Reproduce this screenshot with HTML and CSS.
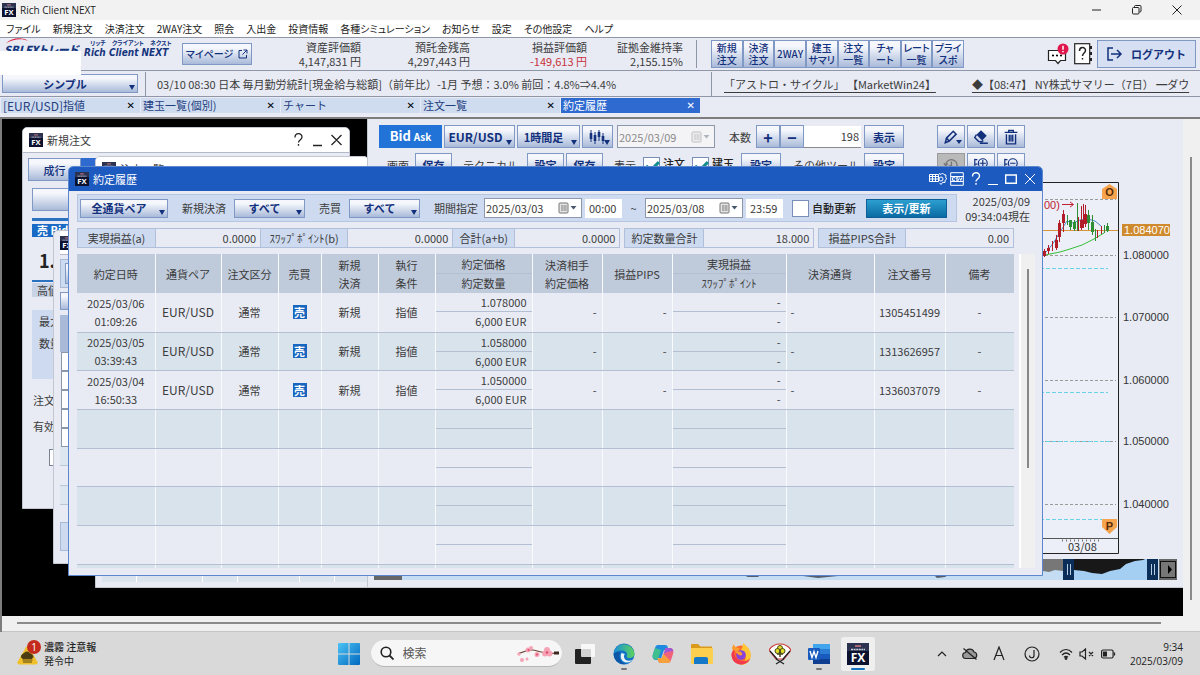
FILE: index.html
```html
<!DOCTYPE html>
<html lang="ja">
<head>
<meta charset="utf-8">
<title>Rich Client NEXT</title>
<link rel="stylesheet" href="styles.css">
</head>
<body>
<svg class="defs" aria-hidden="true">
  <symbol id="fx" viewBox="0 0 22 22">
    <rect width="22" height="22" fill="#0b1230"/>
    <rect width="22" height="8" fill="#2c3350"/>
    <path d="M4 6.500h14" stroke="#c9cdd9" stroke-width="1.400" stroke-dasharray="2 .6"/>
    <path d="M8 3h6" stroke="#e0808a" stroke-width="1.400"/>
    <text x="11" y="18.500" text-anchor="middle" font-family="Open Sans" font-weight="700" font-size="12" fill="#fff">FX</text>
  </symbol>
  <symbol id="cal" viewBox="0 0 20 12">
    <rect x="1" y="1" width="9" height="10" rx="1" fill="#e4e4e4" stroke="#777"/>
    <path d="M3 4h6M3 6h6M3 8h6M4 3v6M7 3v6" stroke="#888" stroke-width=".7"/>
    <path d="M12.500 4h6l-3 3.500z" fill="#46586e"/>
  </symbol>
</svg>

<header class="titlebar">
  <svg class="ico14"><use href="#fx"/></svg>
  <span class="app-name">Rich Client NEXT</span>
  <div class="win-ctl">
    <svg viewBox="0 0 10 10"><path d="M0 5h9"/></svg>
    <svg viewBox="0 0 10 10"><rect x=".5" y="2.500" width="6.500" height="6.500" rx="1"/><path d="M2.500 2V1.500a1 1 0 0 1 1-1H8a1 1 0 0 1 1 1V6a1 1 0 0 1-1 1h-.5"/></svg>
    <svg viewBox="0 0 10 10"><path d="M.5.5l9 9M9.500.5l-9 9"/></svg>
  </div>
</header>

<nav class="menubar">
  <span>ファイル</span><span>新規注文</span><span>決済注文</span><span>2WAY注文</span><span>照会</span><span>入出金</span><span>投資情報</span><span>各種シミュレーション</span><span>お知らせ</span><span>設定</span><span>その他設定</span><span>ヘルプ</span>
</nav>

<section class="account">
  <div class="brand">
    <svg class="swoosh" viewBox="0 0 76 16"><path d="M2 5C8-1 20-1 24 3c-6-3-14-2-22 2z" fill="#d9233f"/></svg>
    <span class="brand-sbi">SBI FXトレード</span>
  </div>
  <div class="product"><small>リッチ　クライアント　ネクスト</small><b>Rich Client NEXT</b></div>
  <button class="btn mypage">マイページ <svg viewBox="0 0 10 10"><path d="M4 1.500H1v7.500h7.500V6M5.500 1H9v3.500M9 1L4.500 5.500"/></svg></button>
  <dl class="figures">
    <div><dt>資産評価額</dt><dd>4,147,831 円</dd></div>
    <div><dt>預託金残高</dt><dd>4,297,443 円</dd></div>
    <div><dt>損益評価額</dt><dd class="neg">-149,613 円</dd></div>
    <div><dt>証拠金維持率</dt><dd>2,155.15%</dd></div>
  </dl>
  <div class="quick">
    <button>新規<br>注文</button><button>決済<br>注文</button><button>2WAY</button><button>建玉<br>サマリ</button><button>注文<br>一覧</button><button>チャ<br>ート</button><button>レート<br>一覧</button><button>プライ<br>スポ</button>
  </div>
  <div class="right-tools">
    <svg class="chat" viewBox="0 0 22 22"><path d="M1.500 7.500h17v10h-5L11 20.500 8.500 17.500h-7z" fill="#fff" stroke="#222" stroke-width="1.200"/><circle cx="6" cy="12.500" r="1.100"/><circle cx="10" cy="12.500" r="1.100"/><circle cx="14" cy="12.500" r="1.100"/><circle cx="16" cy="6" r="5.500" fill="#e0174c"/><path d="M16 2.800v4M16 8v1.300" stroke="#fff" stroke-width="1.500"/></svg>
    <svg class="help" viewBox="0 0 18 22"><rect x=".7" y=".7" width="15" height="20" fill="#fff" stroke="#222" stroke-width="1.200"/><path d="M17 3v3M17 9v3M17 15v3" stroke="#222" stroke-width="2"/><path d="M5.500 8c0-4.500 6-4.500 6-.5 0 2.500-3 2.500-3 5.500M8.500 15v1.600" fill="none" stroke="#222" stroke-width="1.500"/></svg>
    <button class="btn logout"><svg viewBox="0 0 16 14"><path d="M6 1H1v12h5M4 7h10M10 3l4 4-4 4"/></svg>ログアウト</button>
  </div>
  <div class="mask"></div>
</section>

<section class="info">
  <span class="combo layout"><select aria-label="レイアウト"><option>シンプル</option></select></span>
  <p class="econ">03/10 08:30 日本 毎月勤労統計[現金給与総額]（前年比）-1月 予想：3.0% 前回：4.8%⇒4.4%</p>
  <p class="news"><a href="#">「アストロ・サイクル」 【MarketWin24】</a><a href="#">◆【08:47】 NY株式サマリー（7日） ━ダウ</a></p>
</section>

<nav class="tabs">
  <div class="tab"><span class="lat">[EUR/USD]</span>指値<button aria-label="閉じる">✕</button></div>
  <div class="tab">建玉一覧(個別)<button aria-label="閉じる">✕</button></div>
  <div class="tab">チャート<button aria-label="閉じる">✕</button></div>
  <div class="tab">注文一覧<button aria-label="閉じる">✕</button></div>
  <div class="tab active">約定履歴<button aria-label="閉じる">✕</button></div>
</nav>

<main class="workspace">
 <div class="desk-row">
  <div class="desktop">

   <section class="win w-order">
    <header class="win-title"><svg class="ico14"><use href="#fx"/></svg>新規注文
     <svg class="ctl" viewBox="0 0 56 14"><path d="M2 4.500c0-5 7-5 7-.5 0 3-3.500 3-3.500 5.500M5.500 11v1.800M20 12.500h9M38.500 2l10 10M48.500 2l-10 10" fill="none" stroke="#222" stroke-width="1.300"/></svg>
    </header>
    <div class="order-tabs"><button class="btn">成行</button><i></i></div>
    <button class="btn order-wide" aria-label="注文"></button>
    <div class="bid">売 Bid</div>
    <div class="bid-price">1.08</div>
    <div class="hi">高値</div>
    <div class="lot"><span>最大</span><span>数量</span></div>
    <div class="order-label">注文</div>
    <div class="order-label">有効</div>
    <input type="checkbox" class="order-check" aria-label="確認">
   </section>

   <section class="win w-list">
    <header class="win-title"><svg class="ico14"><use href="#fx"/></svg>注文一覧</header>
    <div class="list-foot"><i></i><i></i><i></i><i></i><i></i><i></i></div>
   </section>

   <section class="win w-chart">
    <div class="ch-bar">
     <button class="bidask">Bid <small>Ask</small></button>
     <span class="combo pair"><select aria-label="通貨ペア"><option>EUR/USD</option></select></span>
     <span class="combo foot"><select aria-label="足種"><option>1時間足</option></select></span>
     <span class="combo kind"><button class="btn" aria-label="チャート種類"><svg viewBox="0 0 16 14"><path d="M2 0v12M6 2v12M10 0v11M14 3v11" stroke="#12307c"/><path d="M2 3v6M6 5v6M10 2v5M14 6v5" stroke="#12307c" stroke-width="2.600"/></svg></button></span>
     <span class="date off"><input value="2025/03/09" aria-label="日付"><svg><use href="#cal"/></svg></span>
     <label class="count" for="cnt">本数</label>
     <button class="btn step">+</button><button class="btn step">−</button>
     <input id="cnt" class="cnt" value="198">
     <button class="btn show">表示</button>
     <span class="draw">
      <button class="btn caret" aria-label="描画"><svg viewBox="0 0 14 14"><path d="M3 8l6-6 2.500 2.500-6 6L2 12zM3 8l2.500 2.500" fill="none" stroke="#12307c" stroke-width="1.300"/></svg></button>
      <button class="btn" aria-label="消去"><svg viewBox="0 0 14 14"><path d="M7 1l5 5-4 4-5-5z" fill="#12307c"/><path d="M3 5L1.500 7.500 5 11h3l1-1M6 12.500h7" fill="none" stroke="#12307c" stroke-width="1.200"/></svg></button>
      <button class="btn" aria-label="削除"><svg viewBox="0 0 14 14"><path d="M1.500 3h11M5 3V1.300h4V3M3 4.500V13h8V4.500M5.500 5v6M7 5v6M8.500 5v6" fill="none" stroke="#12307c" stroke-width="1.200"/></svg></button>
     </span>
    </div>
    <div class="ch-bar second">
     <span class="t1">画面</span><button class="btn sm">保存</button>
     <span class="t2">テクニカル</span><button class="btn sm">設定</button><button class="btn sm">保存</button>
     <span class="t3">表示</span><label><input type="checkbox" checked>注文</label><label><input type="checkbox" checked>建玉</label><button class="btn set">設定</button>
     <span class="t4">その他ツール</span><button class="btn set">設定</button>
     <span class="draw">
      <button class="btn grey" aria-label="履歴"><svg viewBox="0 0 18 18"><path d="M3 9a6.500 6.500 0 1 1 1 4M1 7l2 2.500L5.500 7.500M9.500 5v5h-3" fill="none" stroke="#777" stroke-width="1.500"/></svg></button>
      <button class="btn" aria-label="拡大"><svg viewBox="0 0 18 18"><path d="M2 2v12M2 3h3M2 8h3M11 3.500v7M7.500 7h7" fill="none" stroke="#12307c" stroke-width="1.300"/><circle cx="11" cy="7" r="5" fill="none" stroke="#12307c" stroke-width="1.300"/></svg></button>
      <button class="btn" aria-label="縮小"><svg viewBox="0 0 18 18"><path d="M2 2v12M2 3h3M2 8h3M8 7h6" fill="none" stroke="#12307c" stroke-width="1.300"/><circle cx="11" cy="7" r="5" fill="none" stroke="#12307c" stroke-width="1.300"/></svg></button>
     </span>
    </div>
    <div class="plot">
     <svg viewBox="0 0 138 372" width="138" height="372">
      <path d="M0 .5H78.500V371.500H0" fill="#eceff7" stroke="#222"/>
      <path d="M0 17.500H76M0 73.500H76M0 135.500H76M0 198.500H76M0 259.500H76M0 322.500H76" stroke="#9a9a9a" stroke-dasharray="3 2"/>
      <path d="M0 86.500H68M0 210.500H68M0 259.500H70M0 337.500H62" stroke="#67d3e6" stroke-dasharray="4 2"/>
      <path d="M0 48.500H78" stroke="#d9953c"/>
      <path d="M0 76L8 68 14 60 20 50 27 39 33 41 40 38 48 37 55 39 61 44" fill="none" stroke="#4a8bd0"/>
      <path d="M0 74L10 72 20 70 30 67 42 63 54 57 64 51" fill="none" stroke="#35c035"/>
      <path d="M4.500 67v8M8.500 63v9M12.500 59v10M16.500 53v15M19.500 38v22M23.500 28v22M38.500 35v14M41.500 24v24M43.500 22v24M45.500 23v22M57.500 48v8M61.500 44v8" stroke="#b01d28"/>
      <path d="M4.500 69v5M8.500 66v3M16.500 58v8M19.500 41v14M23.500 32v9M41.500 38v8M45.500 32v10" stroke="#b01d28" stroke-width="3"/>
      <path d="M27.500 33v10M30.500 38v10M34.500 38v11M37.500 21v28M48.500 28v20M52.500 33v20M55.500 47v12M64.500 43v8M67.500 41v9" stroke="#2f8f36"/>
      <path d="M30.500 38v7M34.500 40v7M48.500 33v8M52.500 40v10M67.500 44v5" stroke="#2f8f36" stroke-width="3"/>
      <text x="4" y="27" class="red">00)</text>
      <path d="M22 22.500h11M30 20l3.500 2.500L30 25" fill="none" stroke="#c02030"/>
      <path d="M69.500 2L77 7v10H62V7z" fill="#f6a44d"/><text x="69.500" y="14" text-anchor="middle" class="mk">O</text>
      <path d="M62 337h15v8l-7.500 7-7.500-7z" fill="#f6a44d"/><text x="69.500" y="348" text-anchor="middle" class="mk">P</text>
      <path d="M0 356.500H78" stroke="#555"/><path d="M22 358.500H62" stroke="#777" stroke-width="2" stroke-dasharray="1 3"/>
      <text x="28" y="369" class="day">03/08</text>
      <rect x="82" y="42" width="48" height="12" fill="#cf8a2e"/><text x="84" y="52" class="now">1.084070</text>
      <text x="83" y="77">1.080000</text><text x="83" y="139">1.070000</text><text x="83" y="202">1.060000</text><text x="83" y="263">1.050000</text><text x="83" y="326">1.040000</text>
     </svg>
    </div>
    <div class="navi">
     <span class="navi-l"></span>
     <span class="navi-mid"></span>
     <svg viewBox="0 0 434 21" width="434" height="21"><rect width="434" height="21" fill="#c4ddf3"/><path d="M0 16h10l2 1h4l-1 1H5zM35 15h70l-10 2-20 2-15-2zM190 15h17l-5 3-8 1z" fill="#555d6b"/><path d="M300 0h20v12l-8-1-6 2-6-1z" fill="#777"/><rect x="330" width="74" height="21" fill="#a4cef2"/><path d="M331 0h71l-2 1-8 1-9 3-6 5-10 2-8 3-10-1-8-2-10-1z" fill="#181818"/><path d="M320 0h11v21h-11zM404 0h11v21h-11z" fill="#0a2e57"/><path d="M324.500 5v11M327.500 5v11M408.500 5v11M411.500 5v11" stroke="#b8cde2"/><rect x="416" width="18" height="21" fill="#666"/><rect x="417.500" y="2.500" width="15" height="16" fill="#777" stroke="#111"/><path d="M425 6l4 4.500-4 4.500z" fill="#000"/></svg>
    </div>
   </section>

   <section class="win w-pos">
    <header class="win-title"><svg class="ico14"><use href="#fx"/></svg></header>
    <div class="pos-filter"><button class="btn" aria-label="通貨ペア"></button></div>
    <button class="btn pos-btn" aria-label="決済"></button>
    <div class="pos-head"></div>
    <div class="pos-box"></div><div class="pos-box"></div><div class="pos-box"></div><div class="pos-box"></div><div class="pos-box"></div>
    <div class="pos-rows"></div>
    <div class="pos-sum"></div>
   </section>

   <section class="win w-main">
    <header class="win-title">
     <svg class="ico14"><use href="#fx"/></svg>約定履歴
     <span class="main-ctl">
      <svg width="18" height="14" viewBox="0 0 18 14"><path d="M.5 2.500h9v7h-9zM.5 4.500h9M.5 7h9M3.500 2.500v7M6.500 2.500v7"/><path d="M10 1.500l2 1 1.500-1.500 1.500 1.700 2 .3-.3 2.200 1 1.800-1.500 1.200-.2 2.300-2.300-.2L12 12.500l-1.500-1.700"/><circle cx="12" cy="7" r="2"/></svg>
      <svg width="14" height="14" viewBox="0 0 14 14"><path d="M.7.7h12.600v12.600H.7zM.7 4.500h12.600M.7 9.500h12.600"/><path d="M5 5.700H2.500v2.600H5M8.500 5.700H6.200V7h2.300v1.300H6.200M9.500 5.500l1.200 3 1.200-3"/></svg>
      <svg width="10" height="14" viewBox="0 0 10 14"><path d="M1.500 4.500c0-5 7-5 7-.5 0 3-3.500 3-3.500 5.500M5 11v1.800" stroke-width="1.400"/></svg>
      <svg width="10" height="14" viewBox="0 0 10 14"><path d="M0 12.500h10"/></svg>
      <svg width="12" height="14" viewBox="0 0 12 14"><path d="M.7 3h10.600v8.300H.7z" stroke-width="1.400"/></svg>
      <svg width="12" height="14" viewBox="0 0 12 14"><path d="M1 2l10 10M11 2L1 12"/></svg>
     </span>
    </header>
    <div class="main-body">
     <div class="filter-row">
      <form class="filter">
       <span class="combo f-pair"><select aria-label="通貨ペア"><option>全通貨ペア</option></select></span>
       <label for="s1">新規決済</label><span class="combo f-all"><select id="s1"><option>すべて</option></select></span>
       <label for="s2">売買</label><span class="combo f-all"><select id="s2"><option>すべて</option></select></span>
       <label for="d1">期間指定</label>
       <span class="date"><input id="d1" value="2025/03/03"><svg><use href="#cal"/></svg></span>
       <input class="time" value="00:00" aria-label="開始時刻"><span class="tilde">~</span>
       <span class="date"><input value="2025/03/08" aria-label="終了日"><svg><use href="#cal"/></svg></span>
       <input class="time" value="23:59" aria-label="終了時刻">
       <label class="auto"><input type="checkbox">自動更新</label>
       <button type="button" class="refresh">表示/更新</button>
      </form>
      <div class="asof">2025/03/09<br>09:34:04現在</div>
     </div>
     <div class="summary">
      <dl class="g1"><dt>実現損益(a)</dt><dd>0.0000</dd><dt>ｽﾜｯﾌﾟﾎﾟｲﾝﾄ(b)</dt><dd>0.0000</dd><dt>合計(a+b)</dt><dd>0.0000</dd></dl>
      <dl class="g2"><dt>約定数量合計</dt><dd>18.000</dd></dl>
      <dl class="g3"><dt>損益PIPS合計</dt><dd>0.00</dd></dl>
     </div>
     <div class="grid-wrap">
      <div class="grid-clip">
      <table class="grid">
       <colgroup><col style="width:78px"><col style="width:66px"><col style="width:57px"><col style="width:43px"><col style="width:57px"><col style="width:57px"><col style="width:97px"><col style="width:70px"><col style="width:70px"><col style="width:114px"><col style="width:88px"><col style="width:71px"><col style="width:69px"></colgroup>
       <thead><tr><th>約定日時</th><th>通貨ペア</th><th>注文区分</th><th>売買</th><th>新規<br>決済</th><th>執行<br>条件</th><th class="two"><div>約定価格</div><div>約定数量</div></th><th>決済相手<br>約定価格</th><th>損益PIPS</th><th class="two"><div>実現損益</div><div>ｽﾜｯﾌﾟﾎﾟｲﾝﾄ</div></th><th>決済通貨</th><th>注文番号</th><th>備考</th></tr></thead>
       <tbody>
        <tr><td>2025/03/06<br>01:09:26</td><td class="lat">EUR/USD</td><td>通常</td><td><b class="sell">売</b></td><td>新規</td><td>指値</td><td class="two"><div>1.078000</div><div>6,000 EUR</div></td><td class="r">-</td><td class="r">-</td><td class="two"><div>-</div><div>-</div></td><td class="l">-</td><td>1305451499</td><td>-</td></tr>
        <tr><td>2025/03/05<br>03:39:43</td><td class="lat">EUR/USD</td><td>通常</td><td><b class="sell">売</b></td><td>新規</td><td>指値</td><td class="two"><div>1.058000</div><div>6,000 EUR</div></td><td class="r">-</td><td class="r">-</td><td class="two"><div>-</div><div>-</div></td><td class="l">-</td><td>1313626957</td><td>-</td></tr>
        <tr><td>2025/03/04<br>16:50:33</td><td class="lat">EUR/USD</td><td>通常</td><td><b class="sell">売</b></td><td>新規</td><td>指値</td><td class="two"><div>1.050000</div><div>6,000 EUR</div></td><td class="r">-</td><td class="r">-</td><td class="two"><div>-</div><div>-</div></td><td class="l">-</td><td>1336037079</td><td>-</td></tr>
        <tr><td></td><td></td><td></td><td></td><td></td><td></td><td class="two"><div></div><div></div></td><td></td><td></td><td class="two"><div></div><div></div></td><td></td><td></td><td></td></tr>
        <tr><td></td><td></td><td></td><td></td><td></td><td></td><td class="two"><div></div><div></div></td><td></td><td></td><td class="two"><div></div><div></div></td><td></td><td></td><td></td></tr>
        <tr><td></td><td></td><td></td><td></td><td></td><td></td><td class="two"><div></div><div></div></td><td></td><td></td><td class="two"><div></div><div></div></td><td></td><td></td><td></td></tr>
        <tr><td></td><td></td><td></td><td></td><td></td><td></td><td class="two"><div></div><div></div></td><td></td><td></td><td class="two"><div></div><div></div></td><td></td><td></td><td></td></tr>
        <tr><td></td><td></td><td></td><td></td><td></td><td></td><td></td><td></td><td></td><td></td><td></td><td></td><td></td></tr>
       </tbody>
      </table>
      </div>
      <div class="grid-scroll"><i></i></div>
     </div>
    </div>
   </section>
  </div>
  <div class="vscroll"><i></i></div>
 </div>
 <div class="hscroll"><i></i></div>
</main>

<footer class="taskbar">
 <div class="weather">
  <svg width="24" height="26" viewBox="0 0 24 26"><path d="M11 6L20.500 22a2 2 0 0 1-1.500 2.500H2A2 2 0 0 1 .5 22L9 7z" fill="#efc02a"/><path d="M5.500 18.500a2.500 2.500 0 0 1 1-4.500 4 4 0 0 1 7 0 2.500 2.500 0 0 1 1.500 4.500zM5.500 20h10M6 22h9" fill="#4a3b12" stroke="#4a3b12" stroke-width=".9"/><circle cx="17" cy="7" r="7" fill="#c42b1c"/><text x="17" y="10.500" text-anchor="middle" font-size="10" fill="#fff" font-family="Open Sans">1</text></svg>
  <p><b>濃霧 注意報</b><br>発令中</p>
 </div>
 <div class="apps">
  <svg width="22" height="22" viewBox="0 0 22 22"><defs><linearGradient id="wn" x2="1" y2="1"><stop stop-color="#4cc4f5"/><stop offset="1" stop-color="#0067bf"/></linearGradient></defs><path d="M0 1a1 1 0 0 1 1-1h9.500v10.500H0zM11.500 0H21a1 1 0 0 1 1 1v9.500H11.500zM0 11.500h10.500V22H1a1 1 0 0 1-1-1zM11.500 11.500H22V21a1 1 0 0 1-1 1h-9.500z" fill="url(#wn)"/></svg>
  <label class="search">
   <svg width="14" height="14" viewBox="0 0 14 14"><circle cx="6" cy="6" r="4.800" fill="none" stroke="#222" stroke-width="1.600"/><path d="M9.500 9.500l4 4" stroke="#222" stroke-width="1.800"/></svg>
   <input placeholder="検索" aria-label="検索">
   <svg width="44" height="22" viewBox="0 0 44 22"><path d="M3 11c5 0 7-4 14-3s12 5 25 3" fill="none" stroke="#6b4636" stroke-width="1.200"/><path d="M38 11h5" stroke="#3b2620" stroke-width="3"/><g fill="#f5a3b5"><circle cx="12" cy="8" r="2.500"/><circle cx="15" cy="6" r="2"/><circle cx="21" cy="12.500" r="2.500"/><circle cx="31" cy="8" r="3"/><circle cx="29" cy="11.500" r="3"/><circle cx="33.500" cy="11.500" r="3"/><circle cx="3" cy="12" r="1.700"/><circle cx="6" cy="18" r="2"/><circle cx="11" cy="17" r="1.500"/></g><g fill="#d94f72"><circle cx="31" cy="10.500" r="1.300"/><circle cx="21" cy="12.500" r="1"/><circle cx="12.500" cy="8" r="1"/></g></svg>
  </label>
  <span class="app"><svg width="22" height="22" viewBox="0 0 22 22"><rect x="1" y="6" width="16" height="15" rx="1" fill="#222"/><rect x="7" y="1" width="14" height="13" rx="1" fill="#fff" opacity=".8"/></svg></span>
  <span class="app run"><svg width="22" height="22" viewBox="0 0 22 22"><defs><linearGradient id="eg" x2="1"><stop stop-color="#1b8fd8"/><stop offset="1" stop-color="#5bd35c"/></linearGradient></defs><circle cx="11" cy="11" r="10.500" fill="#1273c5"/><path d="M.6 10A10.500 10.500 0 0 1 21.400 10.500c0 4-3.400 5-6.400 4.500-2-.5-1-1.500-1-3.500C14 8 10 7 7 7.500 3.500 8 1.500 9.500.6 10z" fill="url(#eg)"/><path d="M8.500 10c-2 4 0 9 4.500 9.500 3 .3 5-1 6.500-2.500-5 2-8 0-8.500-3-.2-1.500.5-2.500.8-3z" fill="#e8f2f6"/><path d="M7.500 9.500C5 13 7 20 13 21 7 22 1 18 .6 11c2-2.500 5-2.500 6.900-1.500z" fill="#0d56a6"/></svg></span>
  <span class="app"><svg width="22" height="22" viewBox="0 0 22 22"><path d="M6 2h7c2 0 2.500 1 3 3l.7 2H12L8.500 17H4c-3 0-4-3-3-6l2-6c.5-2 1.500-3 3-3z" fill="#1e8be0"/><path d="M1 11l2-6 6 2-3 9.500H4c-3 0-4-2.500-3-5.500z" fill="#3fbf8f"/><path d="M16 20H9c-2 0-2.500-1-3-3l-.5-2H10L13.500 5H18c3 0 4 3 3 6l-2 6c-.5 2-1.500 3-3 3z" fill="#f2617a"/><path d="M6 17l-.5-2H10l1.500-4 7 7c-.7 1.300-1.500 2-2.500 2H9c-2 0-2.500-1-3-3z" fill="#f6a13c"/><path d="M13.500 5H18c2 0 3 1.500 3.300 3L15 9l-3 2z" fill="#a158d8"/></svg></span>
  <span class="app"><svg width="22" height="22" viewBox="0 0 22 22"><path d="M0 2a1 1 0 0 1 1-1h6l2.500 2.500H21V8H0z" fill="#d99a1c"/><rect y="5" width="22" height="16" rx="1" fill="#fcd04e"/><path d="M3 21v-5a2 2 0 0 1 2-2h10a2 2 0 0 1 2 2v5z" fill="#1678c8"/></svg></span>
  <span class="app"><svg width="22" height="22" viewBox="0 0 22 22"><circle cx="11" cy="12" r="9.500" fill="#ff6a2c"/><path d="M13 0c5 4 9 8 7.500 15-1 4-5 7-9.500 7 8-6 5-12-1-14 2-2 3-5 3-8z" fill="#ffc533"/><path d="M2 6c0-2 1-4 2-5 0 3 3 4 6 4l-3 5z" fill="#ff9a2e"/><circle cx="11" cy="12" r="4.800" fill="#8a42d8"/><path d="M6 9c3-2 7 0 6 3-2 1-4 0-6-3z" fill="#ff9a2e"/><path d="M1.500 11c0 7 5 10.500 9.500 10.500s8-2.500 9-6c-3 3-9 4-13 0C4 13 4 9 5 7 3 8 1.500 9 1.500 11z" fill="#f0394f"/></svg></span>
  <span class="app"><svg width="22" height="22" viewBox="0 0 22 22"><path d="M0 7C5-1 17-1 22 7l-7 9H7z" fill="#fff" stroke="#c33" stroke-width="1.200"/><path d="M1 8l7 8M21 8l-7 8M7 16l8 5M15 16l-8 5" stroke="#222" stroke-width="1.200"/><circle cx="11" cy="5" r="2.500" fill="#e4dc2a" stroke="#474b16"/><circle cx="8.500" cy="8" r="2.500" fill="#e4dc2a" stroke="#474b16"/><circle cx="13.500" cy="8" r="2.500" fill="#e4dc2a" stroke="#474b16"/><path d="M11 7v7M8 11h6" stroke="#474b16" stroke-width="1.500"/></svg></span>
  <span class="app run"><svg width="22" height="22" viewBox="0 0 22 22"><rect x="5" y="1" width="17" height="20" rx="1" fill="#2b7cd3"/><rect x="5" y="1" width="17" height="5" fill="#41a5ee"/><rect x="5" y="11" width="17" height="5" fill="#185abd"/><rect x="5" y="16" width="17" height="5" fill="#103f91"/><rect y="5" width="12" height="12" rx="1" fill="#185abd"/><path d="M2 8l2 6.500L6 8.500l2 6L10 8" fill="none" stroke="#fff" stroke-width="1.400"/></svg></span>
  <span class="app on"><svg width="22" height="22"><use href="#fx"/></svg></span>
 </div>
 <div class="tray">
  <svg width="10" height="6" viewBox="0 0 10 6"><path d="M1 5l4-4 4 4"/></svg>
  <svg class="m1" width="16" height="14" viewBox="0 0 16 14"><path d="M4 11.500a3 3 0 0 1-.5-6 4.500 4.500 0 0 1 8.500-.5 3.300 3.300 0 0 1 0 6.500zM1.500 1.500l13 11" fill="#999"/></svg>
  <svg class="m2" width="12" height="15" viewBox="0 0 12 15"><path d="M1 14L6 1l5 13M3 9.500h6"/></svg>
  <svg class="m3" width="16" height="16" viewBox="0 0 16 16"><circle cx="8" cy="8" r="7"/><path d="M10 4v5.500c0 3-4.500 3-4.500 0"/></svg>
  <svg class="m3" width="14" height="12" viewBox="0 0 14 12"><path d="M1 4.500c3.500-4 8.500-4 12 0M3 7c2.500-2.500 5.500-2.500 8 0M5 9.200c1.300-1.200 2.700-1.200 4 0"/><circle cx="7" cy="10.500" r=".8" fill="#222"/></svg>
  <svg class="m4" width="15" height="12" viewBox="0 0 15 12"><path d="M1 4v4h2l3.500 3V1L3 4zM10 4l4 4M14 4l-4 4"/></svg>
  <svg class="m5" width="15" height="10" viewBox="0 0 15 10"><rect x=".6" y="1" width="11.500" height="8" rx="1.500"/><rect x="2" y="2.500" width="4" height="5" fill="#222" stroke="none"/><path d="M13.500 3.500v3"/></svg>
  <p>9:34<br>2025/03/09</p>
 </div>
</footer>
</body>
</html>
```
FILE: styles.css
```css
* { box-sizing: border-box; }
body {
  margin: 0;
  min-height: 100vh;
  display: flex;
  flex-direction: column;
  overflow: hidden;
  background: #e8ebf4;
  color: #3c3c3c;
  font-family: "Noto Sans CJK JP", "Noto Sans", sans-serif;
  font-size: 11px;
  line-height: 16px;
  white-space: nowrap;
}
p, dl, dd { margin: 0; }
button, input, select { font: inherit; color: inherit; margin: 0; }
button { cursor: pointer; white-space: nowrap; }
.defs { position: absolute; width: 0; height: 0; }
.ico14 { width: 14px; height: 14px; flex: none; }
.lat { font-size: 12px; }

.btn {
  display: inline-flex;
  align-items: center;
  justify-content: center;
  padding: 0;
  border: 1px solid #7f98c4;
  background: linear-gradient(#f5f7fc 20%, #a9bad9);
  color: #12307c;
  font-weight: 700;
}
.combo { position: relative; display: inline-flex; flex: none; }
.combo::after {
  content: "";
  position: absolute;
  right: 3px;
  bottom: 3px;
  border: 3px solid transparent;
  border-top: 5px solid #12307c;
  border-bottom: 0;
  pointer-events: none;
}
.combo select {
  appearance: none;
  width: 100%;
  padding: 0 10px 0 0;
  border: 1px solid #7f98c4;
  border-radius: 0;
  background: linear-gradient(#f5f7fc 20%, #a9bad9);
  color: #12307c;
  font-weight: 700;
  text-align: center;
  text-align-last: center;
}

/* application chrome */
.titlebar {
  flex: none;
  height: 20px;
  display: flex;
  align-items: center;
  gap: 4px;
  padding: 0 18px 0 2px;
  background: #f2f2f2;
  color: #1c1c1c;
  font-family: "Open Sans", sans-serif;
}
.app-name { font-size: 10px; }
.win-ctl { margin-left: auto; display: flex; gap: 30px; }
.win-ctl svg { width: 10px; height: 10px; fill: none; stroke: #222; }
.menubar {
  flex: none;
  height: 18px;
  display: flex;
  gap: 12px;
  padding: 1px 6px;
  background: #fff;
  color: #222;
  font-size: 10px;
  font-feature-settings: "palt";
  border-bottom: 1px solid #8f96a8;
}
.account {
  position: relative;
  flex: none;
  height: 33px;
  display: flex;
  align-items: center;
  padding-right: 4px;
  border-bottom: 1px solid #8f96a8;
}
.brand { width: 81px; flex: none; align-self: flex-start; display: flex; flex-direction: column; padding-left: 4px; }
.swoosh { width: 76px; height: 16px; margin-bottom: -13px; }
.brand-sbi { color: #14377f; font-weight: 800; font-size: 11px; font-style: italic; font-feature-settings: "palt"; }
.product { width: 101px; flex: none; align-self: flex-start; padding: 1px 0 0 3px; color: #16367e; }
.product small { display: block; margin-left: 6px; font-size: 6px; line-height: 8px; font-weight: 700; font-feature-settings: "palt"; }
.product b { display: block; font: italic 700 10px/12px "DejaVu Sans Condensed", sans-serif; }
.mypage { width: 70px; height: 22px; gap: 5px; flex: none; font-size: 10px; font-weight: 500; font-feature-settings: "palt"; }
.mypage svg { width: 10px; height: 10px; fill: none; stroke: #12307c; }
.figures { display: flex; flex: 1; justify-content: flex-end; line-height: 14px; text-align: right; padding-right: 12px; border-right: 1px solid #8f96a8; }
.figures > div:nth-child(2) { width: 109px; }
.figures > div:nth-child(3) { width: 117px; }
.figures > div:nth-child(4) { width: 97px; padding-right: 1px; }
.neg { color: #c8323c; }
.quick { display: flex; flex: none; margin-left: 14px; width: 253px; }
.quick button {
  flex: 1;
  height: 28px;
  padding: 0;
  border: 1px solid #7f98c4;
  background: linear-gradient(#f5f7fc 20%, #a9bad9);
  color: #12307c;
  font-size: 10px;
  font-weight: 500;
  line-height: 12px;
  font-feature-settings: "palt";
}
.right-tools { display: flex; align-items: center; margin-left: 83px; flex: none; }
.chat { width: 22px; height: 22px; }
.help { width: 18px; height: 22px; margin-left: 5px; }
.logout { width: 99px; height: 28px; margin-left: 5px; gap: 8px; background: #d7e0f2; }
.logout svg { width: 16px; height: 14px; fill: none; stroke: #12307c; stroke-width: 1.5; }
.mask { position: absolute; z-index: 2; left: 0; top: 13px; width: 81px; height: 24px; background: #fff; }
.info {
  flex: none;
  height: 26px;
  display: flex;
  align-items: center;
  padding: 0 4px 0 2px;
  border-bottom: 1px solid #8f96a8;
  overflow: hidden;
}
.layout { width: 136px; margin-right: 7px; }
.layout select { height: 19px; }
.econ { flex: 1; padding-left: 11px; border-left: 1px solid #8f96a8; line-height: 24px; }
.news { display: flex; gap: 36px; width: 485px; padding-left: 12px; border-left: 1px solid #8f96a8; line-height: 24px; overflow: hidden; }
.news a { color: inherit; text-underline-offset: 3px; }
.tabs { flex: none; height: 20px; display: flex; gap: 1px; padding: 1px 0 0 1px; }
.tab { display: flex; width: 139px; height: 15px; padding: 0 5px 0 2px; background: #cfdcf0; color: #24407f; line-height: 15px; }
.tab button { margin-left: auto; padding: 0; border: 0; background: none; color: #000; font: 700 10px/15px "DejaVu Sans", sans-serif; }
.tab.active { background: #2f6ad0; color: #fff; }
.tab.active button { color: #fff; }

/* desktop */
.workspace { flex: 1; display: flex; flex-direction: column; border: 2px solid #7d7d7d; border-width: 2px 0 0 2px; background: #f0f0f0; }
.desk-row { flex: 1; display: flex; }
.desktop { position: relative; flex: 1; background: #000; overflow: hidden; }
.vscroll { width: 17px; padding: 38px 0 16px 7px; display: flex; }
.vscroll i { width: 2px; background: #8a8a8a; }
.hscroll { height: 16px; padding: 6px 39px 0 15px; border-bottom: 1px solid #c4c4c4; }
.hscroll i { display: block; height: 2px; background: #8a8a8a; }
.win { position: absolute; display: flex; flex-direction: column; background: #e8ebf4; border: 1px solid #c2c7d2; border-radius: 5px 5px 0 0; overflow: hidden; }
.win-title { flex: none; display: flex; align-items: center; gap: 4px; height: 24px; padding: 0 6px; background: #fff; }
.ctl { width: 56px; height: 14px; margin-left: auto; }

.w-order { left: 20px; top: 8px; width: 328px; height: 382px; align-items: flex-start; }
.w-order .win-title { width: 100%; height: 25px; padding-right: 0; border-bottom: 1px solid #b4bac8; }
.order-tabs { display: flex; margin: 5px 0 0 5px; }
.order-tabs .btn { width: 53px; height: 23px; font-weight: 500; }
.order-tabs i { width: 60px; height: 23px; background: #2f6ad0; }
.order-wide { width: 130px; height: 23px; margin: 7px 0 7px 9px; }
.bid { width: 130px; margin-left: 9px; padding: 2px 5px 0; border-top: 3px solid #2a72bf; color: #fff; font-weight: 700; line-height: 14px; background: linear-gradient(#e8ebf4 3px, #1a69c4 3px); }
.bid-price { width: 130px; height: 45px; margin-left: 9px; padding: 13px 0 0 7px; font-size: 18px; line-height: 20px; font-weight: 700; color: #222; border-bottom: 2px solid #2a72bf; }
.hi { width: 130px; height: 14px; margin: 1px 0 13px 9px; padding-left: 5px; line-height: 14px; background: #c9d3e6; }
.lot { display: flex; flex-direction: column; gap: 6px; width: 130px; height: 69px; margin: 0 0 13px 9px; padding: 3px 7px; background: #cddaf0; }
.order-label { margin-left: 10px; height: 26px; }
.order-check { appearance: none; width: 16px; height: 17px; margin: 5px 0 0 26px; border: 1px solid #7a8396; background: #fff; }

.w-list { left: 93px; top: 37px; width: 274px; height: 432px; justify-content: space-between; }
.list-foot { height: 18px; margin: 0 0 5px 6px; display: flex; gap: 1px; background: #fff; }
.list-foot i { flex: 1 0 34px; background: #dbe4ee; }
.list-foot i:nth-child(2) { flex-basis: 65px; }
.list-foot i:nth-child(4) { flex-basis: 61px; }

.w-chart { left: 365px; top: 0; right: 0; height: 469px; border-width: 0 0 1px 1px; border-radius: 0; padding: 6px 5px 0 11px; }
.ch-bar { display: flex; align-items: center; height: 23px; }
.ch-bar.second { margin: 5px 0 6px; }
.ch-bar > * { flex: none; }
.ch-bar .btn, .ch-bar select { height: 23px; }
.bidask { width: 63px; height: 23px; margin-right: 2px; padding: 0; border: 0; background: #2273d8; color: #fff; font-weight: 700; font-size: 13px; }
.bidask small { font-size: 10px; }
.pair { width: 71px; margin-right: 2px; }
.pair select { padding-right: 8px; font-size: 12px; }
.foot { width: 63px; margin-right: 2px; }
.kind { width: 31px; margin-right: 4px; }
.kind .btn { width: 100%; padding-right: 2px; }
.kind svg { width: 16px; height: 14px; }
.date { display: inline-flex; align-items: center; width: 98px; height: 20px; border: 1px solid #8d97ab; background: #fff; }
.date input { flex: 1; width: 60px; padding: 0 0 0 1px; border: 0; background: none; }
.date svg { width: 20px; height: 12px; margin-right: 3px; flex: none; }
.date.off { height: 23px; color: #8a8a8a; background: #f4f4f6; margin-right: 14px; }
.date.off svg { opacity: .4; }
.count { margin-right: 5px; }
.step { width: 24px; font-size: 16px; }
.cnt { width: 57px; height: 22px; border: 0; border-bottom: 1px solid #8a8a8a; background: #fff; text-align: right; padding: 0 2px 0 0; }
.show { width: 40px; margin-left: 3px; }
.draw { display: flex; gap: 2px; margin-left: 33px; }
.draw .btn { position: relative; width: 28px; }
.draw svg { width: 16px; height: 16px; }
.draw .grey { background: #b9b9b9; border-color: #9a9a9a; }
.caret::after { content: ""; position: absolute; right: 2px; bottom: 3px; border: 3px solid transparent; border-top: 4px solid #12307c; border-bottom: 0; }
.sm { width: 37px; }
.sm + .sm { margin-left: 2px; }
.set { width: 40px; }
.t1 { margin: 0 6px 0 8px; }
.t2 { margin: 0 9px 0 11px; }
.t3 { margin: 0 7px 0 11px; }
.t4 { margin: 0 5px 0 12px; }
.ch-bar label input { appearance: none; width: 17px; height: 17px; margin-right: 3px; border: 1px solid #7a8fb8; background: #fff; vertical-align: middle; }
.ch-bar label input::before { content: ""; display: block; width: 10px; height: 5px; margin: 3px 0 0 2px; border: solid #128d8d; border-width: 0 0 3px 3px; rotate: -45deg; }
.second label { margin-right: 7px; font-weight: 500; color: #222; }
.plot { display: flex; justify-content: flex-end; margin-right: -5px; }
.plot svg { flex: none; }
.plot text { font: 11px "Liberation Sans", sans-serif; fill: #333; }
.plot .red { fill: #c02030; }
.plot .mk { font-weight: 700; fill: #5a2c08; }
.plot .now { fill: #fff; }
.plot .day { font-family: "Noto Sans CJK JP", sans-serif; }
.plot svg { margin-right: 5px; }
.navi { display: flex; height: 21px; margin: 5px 1px 0 0; }
.navi-l { width: 28px; margin-left: -5px; background: #666; }
.navi-mid { flex: 1; background: #c4ddf3; }

.w-pos { left: 51px; top: 111px; width: 900px; height: 334px; align-items: flex-start; padding-left: 6px; }
.w-pos .win-title { width: 100%; border-bottom: 1px solid #b4bac8; padding-left: 0; }
.pos-filter { width: 200px; height: 29px; margin: 4px 0; padding: 3px 4px; border: 1px solid #a9b9d8; background: #cddaf0; }
.pos-filter .btn { width: 60px; height: 21px; }
.pos-btn { width: 60px; height: 18px; margin-bottom: 5px; }
.pos-head { width: 200px; height: 37px; background: #a9b9d8; }
.pos-box { width: 60px; height: 19px; margin-left: 1px; border: 1px solid #8d97ab; border-right: 0; background: #fff; }
.pos-rows { width: 200px; height: 72px; background: repeating-linear-gradient(#dbe6ef 0 18px, #b8c6d6 18px 19px, #e8ebf4 19px 38px, #b8c6d6 38px 39px); }
.pos-sum { width: 200px; height: 29px; margin-top: 3px; border: 1px solid #a9b9d8; background: #cddaf0; }

/* execution history */
.w-main { left: 66px; top: 47px; right: 140px; height: 410px; border-color: #5c86cf; }
.w-main .win-title { background: #1d5abf; color: #fff; }
.main-ctl { display: flex; align-items: center; gap: 7px; margin-left: auto; }
.main-ctl svg { fill: none; stroke: #fff; }
.main-ctl svg:first-child { margin-right: -4px; }
.main-body { flex: 1; min-height: 0; display: flex; flex-direction: column; padding: 3px 6px 7px 8px; }
.filter-row { display: flex; height: 28px; }
.filter { flex: 1; display: flex; align-items: center; padding: 0 9px 0 2px; border: 1px solid #b5c5e2; background: #cddaef; }
.filter > * { flex: none; }
.filter select { height: 19px; }
.f-pair { width: 88px; margin-right: 14px; }
.f-all { width: 71px; margin: 0 14px 0 8px; }
.filter .date { margin: 0 3px 0 0; }
.filter label[for="d1"] { margin-right: 6px; }
.time { width: 37px; height: 19px; padding: 0 0 0 4px; border: 0; background: #fff; }
.tilde { width: 23px; text-align: center; }
.auto { margin: 0 auto 0 9px; display: flex; align-items: center; gap: 3px; font-weight: 500; color: #222; }
.auto input { appearance: none; width: 17px; height: 17px; border: 1px solid #7a8fb8; background: #fff; }
.refresh { width: 81px; height: 19px; padding: 0; border: 1px solid #0f5f96; background: linear-gradient(#2c9fd0, #0a6ba4); color: #fff; font-weight: 700; line-height: 16px; }
.asof { width: 79px; padding-right: 6px; text-align: right; line-height: 15px; }
.summary { display: flex; gap: 4px; margin: 6px 22px 6px 0; }
.summary dl { display: flex; height: 20px; border: 1px solid #b0bfda; line-height: 18px; }
.summary dt { background: #cddaef; text-align: center; border-right: 1px solid #b0bfda; }
.summary dd { flex: 1; padding-right: 4px; text-align: right; }
.summary dd + dt { border-left: 1px solid #b0bfda; }
.g1 { flex: 545; }
.g1 dt:nth-of-type(1) { width: 78px; }
.g1 dt:nth-of-type(2) { width: 88px; }
.g1 dt:nth-of-type(3) { width: 63px; }
.g2 { flex: 189; }
.g2 dt { width: 79px; }
.g3 { flex: 195; }
.g3 dt { width: 87px; }
.grid-wrap { flex: 1; min-height: 0; display: flex; }
.grid-clip { flex: 1; overflow: hidden; }
.grid { width: 100%; table-layout: fixed; border-collapse: collapse; text-align: center; line-height: 18px; }
.grid th, .grid td { height: 39px; padding: 0; font-weight: 400; border-right: 1px solid #f8fafd; }
.grid th { background: #bfcadb; }
.grid td { border-bottom: 1px solid #b3c0d4; }
.grid tbody tr:nth-child(even) { background: #d9e3ec; }
.grid td.r { text-align: right; padding-right: 5px; }
.grid td.l { text-align: left; padding-left: 4px; }
.two div { height: 19px; line-height: 18px; }
.two div:first-child { border-bottom: 1px solid #b3c0d4; }
td.two div { padding-right: 5px; text-align: right; }
.grid tbody tr:nth-child(3n+2) td { height: 38px; }
.grid tbody tr:nth-child(3n+2) .two div:last-child { height: 18px; }
.sell { display: inline-block; width: 14px; height: 14px; line-height: 14px; background: #1766c0; color: #fff; font-weight: 700; }
.grid-scroll { width: 17px; padding: 15px 0 100px 8px; margin-left: 5px; display: flex; background: linear-gradient(90deg, #fff 2px, #f0f0f0 2px 16px, #e8ebf4 16px); }
.grid-scroll i { width: 2px; background: #888; }

/* taskbar */
.taskbar { flex: none; height: 43px; display: grid; grid-template-columns: 1fr auto 1fr; align-items: center; padding: 0 17px; background: #d9d9d9; color: #222; }
.weather { display: flex; gap: 3px; line-height: 14px; font-size: 10px; }
.weather b { font-weight: 500; }
.apps { display: flex; align-items: center; gap: 4px; padding-left: 12px; }
.search { display: flex; align-items: center; gap: 9px; width: 191px; height: 27px; margin: 0 2px 0 7px; padding: 0 2px 0 9px; border-radius: 14px; background: #f6f6f6; border-bottom: 1px solid #b5b5b5; }
.search input { flex: 1; width: 80px; padding: 0; border: 0; background: none; font-size: 12px; }
.search input::placeholder { color: #555; }
.app { display: flex; align-items: center; justify-content: center; position: relative; width: 35px; height: 34px; border-radius: 3px; }
.app.on { width: 34px; background: #efefef; }
.app.run::after, .app.on::after { content: ""; position: absolute; left: 50%; bottom: 1px; width: 6px; height: 2px; margin-left: -3px; border-radius: 1px; background: #777; }
.app.on::after { width: 14px; margin-left: -7px; background: #1173c2; }
.tray { display: flex; align-items: center; justify-content: flex-end; }
.tray svg { fill: none; stroke: #222; stroke-width: 1.2; }
.m1 { margin-left: 15px; }
.m2 { margin-left: 15px; }
.m3 { margin-left: 19px; }
.m4 { margin-left: 6px; }
.m5 { margin-left: 7px; }
.tray p { margin-left: 14px; text-align: right; font: 10px/14px "Open Sans", sans-serif; }
```
